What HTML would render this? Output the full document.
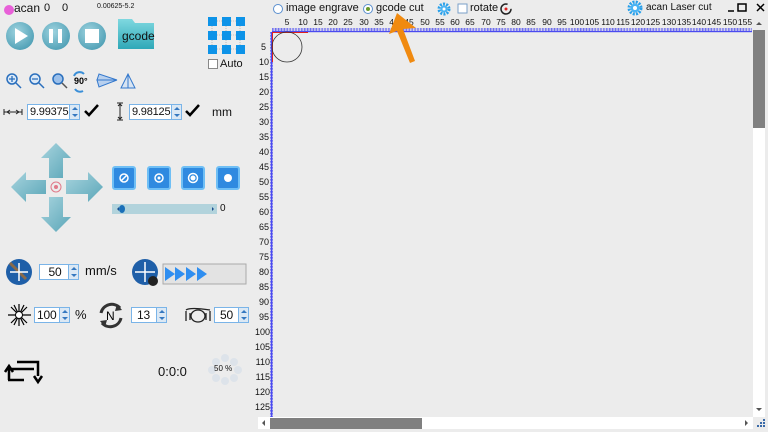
<!DOCTYPE html>
<html><head><meta charset="utf-8">
<style>
*{margin:0;padding:0;box-sizing:border-box}
body{width:768px;height:432px;overflow:hidden;background:#ececec;font-family:"Liberation Sans",sans-serif;color:#111;position:relative}
.a{position:absolute}
.inp{position:absolute;height:16px;border:1px solid #7ab4e8;background:#fff;font-size:11px;line-height:14px;padding-left:2px;letter-spacing:-0.2px}
.inp .sp{position:absolute;right:0;top:0;width:10px;height:14px;background:#dbe8f4;border-left:1px solid #7ab4e8}
.inp .sp:before{content:"";position:absolute;left:2px;top:2px;border:3px solid transparent;border-bottom:3px solid #3578c0;border-top:0}
.inp .sp:after{content:"";position:absolute;left:2px;top:9px;border:3px solid transparent;border-top:3px solid #3578c0;border-bottom:0}
.rb{width:24px;height:24px;background:#2f8ae0;border:2px solid #6fbff5;border-radius:3px}
</style></head><body>

<div class="a" style="left:4px;top:5px;width:10px;height:10px;border-radius:50%;background:#e860d8"></div>
<div class="a" style="left:14px;top:1px;font-size:12px">acan</div>
<div class="a" style="left:44px;top:2px;font-size:11px">0</div>
<div class="a" style="left:62px;top:2px;font-size:11px">0</div>
<div class="a" style="left:97px;top:3px;font-size:7px">0.00625-5.2</div>

<svg class="a" style="left:0;top:0" width="260" height="130">
<defs><radialGradient id="g" cx="40%" cy="35%" r="70%"><stop offset="0" stop-color="#9ed3df"/><stop offset="1" stop-color="#4e9fb5"/></radialGradient>
<linearGradient id="f" x1="0" y1="0" x2="0" y2="1"><stop offset="0" stop-color="#7fd8e0"/><stop offset="1" stop-color="#2fa8b8"/></linearGradient></defs>
<circle cx="20" cy="36" r="14" fill="url(#g)"/><path d="M15 28 L28 36 L15 44Z" fill="#fff"/>
<circle cx="56" cy="36" r="14" fill="url(#g)"/><rect x="49" y="29" width="4" height="14" fill="#fff"/><rect x="58" y="29" width="4" height="14" fill="#fff"/>
<circle cx="92" cy="36" r="14" fill="url(#g)"/><rect x="85" y="29" width="14" height="14" fill="#fff"/>
<path d="M118 19 h14 l3 4 h19 v26 h-36z" fill="url(#f)"/>
<text x="122" y="40" font-size="12" fill="#111" font-family="Liberation Sans">gcode</text>
<g fill="#0d93e8">
<rect x="208" y="17" width="9" height="9"/><rect x="222" y="17" width="9" height="9"/><rect x="236" y="17" width="9" height="9"/>
<rect x="208" y="31" width="9" height="9"/><rect x="222" y="31" width="9" height="9"/><rect x="236" y="31" width="9" height="9"/>
<rect x="208" y="45" width="9" height="9"/><rect x="222" y="45" width="9" height="9"/><rect x="236" y="45" width="9" height="9"/></g>
<g stroke="#999" stroke-dasharray="1 1" stroke-width="0.6"><path d="M217 21h5M231 21h5M217 35h5M231 35h5M217 49h5M231 49h5M212 26v5M226 26v5M240 26v5M212 40v5M226 40v5M240 40v5"/></g>
<g stroke="#2a6fbd" stroke-width="1.5" fill="#dbe9f7">
<circle cx="12" cy="79" r="5"/><path d="M16 83 l5 5"/><circle cx="35" cy="79" r="5"/><path d="M39 83 l5 5"/>
<circle cx="58" cy="79" r="5" fill="#9cc0ea"/><path d="M62 83 l5 5" stroke="#555"/></g>
<path d="M9 79h6M12 76v6M32 79h6" stroke="#2a6fbd" stroke-width="1.3"/>
<text x="74" y="84" font-size="9" font-weight="bold" font-family="Liberation Sans">90°</text>
<path d="M74 76 a6 6 0 0 1 10 -2 M83 91 a6 6 0 0 1 -8 -2" stroke="#3a8fd8" stroke-width="2" fill="none"/>
<path d="M97 80 L117 80 L99 74Z M97 80 L117 80 L99 87Z" fill="#b8d0ee" stroke="#3478cc"/>
<path d="M128 74 L121 88 H135Z" fill="#d8e4f2" stroke="#3478cc"/>
<path d="M128 74 V88" stroke="#3478cc"/>
<path d="M4 112 H22 M4 109 v6 M22 109 v6 M7 112 l3 -2 M7 112 l3 2 M19 112 l-3 -2 M19 112 l-3 2" stroke="#222" stroke-width="1"/>
<path d="M85 111 l4 4 l9 -10" stroke="#000" stroke-width="2.5" fill="none"/>
<path d="M117 103 h6 M120 103 v17 M117 120 h6 M118 106 l2 -2 l2 2 M118 117 l2 2 l2 -2" stroke="#222" stroke-width="1" fill="none"/>
<path d="M186 111 l4 4 l9 -10" stroke="#000" stroke-width="2.5" fill="none"/>
</svg>
<div class="a" style="left:208px;top:59px;width:10px;height:10px;border:1px solid #888;background:#fff"></div>
<div class="a" style="left:220px;top:58px;font-size:11px">Auto</div>
<div class="inp" style="left:27px;top:104px;width:53px">9.99375<span class="sp"></span></div>
<div class="inp" style="left:129px;top:104px;width:53px">9.98125<span class="sp"></span></div>
<div class="a" style="left:212px;top:105px;font-size:12px">mm</div>

<svg class="a" style="left:0;top:130px" width="260" height="150">
<defs><linearGradient id="ar" x1="0" y1="0" x2="1" y2="1"><stop offset="0" stop-color="#a8d4de"/><stop offset="1" stop-color="#5aa6b8"/></linearGradient></defs>
<g fill="url(#ar)">
<path d="M56 13 L71 28 H63 V48 H49 V28 H41Z"/>
<path d="M56 102 L71 87 H63 V67 H49 V87 H41Z"/>
<path d="M11 57 L26 42 V50 H46 V64 H26 V72Z"/>
<path d="M103 57 L88 42 V50 H66 V64 H88 V72Z"/></g>
<circle cx="56" cy="57" r="5" fill="none" stroke="#e07a8a" stroke-width="1"/><circle cx="56" cy="57" r="2" fill="#e07a8a"/>
</svg>
<div class="a rb" style="left:112px;top:166px"></div>
<div class="a rb" style="left:147px;top:166px"></div>
<div class="a rb" style="left:181px;top:166px"></div>
<div class="a rb" style="left:216px;top:166px"></div>
<svg class="a" style="left:0;top:160px" width="260" height="60">
<g stroke="#fff" fill="none" stroke-width="1.5"><circle cx="124" cy="18" r="4"/><path d="M121 21 l6 -6"/><circle cx="159" cy="18" r="4"/><circle cx="193" cy="18" r="4.5"/></g>
<circle cx="159" cy="18" r="1.5" fill="#fff"/><circle cx="193" cy="18" r="2.5" fill="#fff"/><circle cx="228" cy="18" r="4" fill="#fff"/>
<rect x="112" y="44" width="105" height="10" fill="#b2d3dc"/>
<ellipse cx="122" cy="49" rx="3" ry="4" fill="#1a6fb8"/>
<path d="M117 49 l2 -2 v4z M214 49 l-2 -2 v4z" fill="#1a4f90"/>
</svg>
<div class="a" style="left:220px;top:203px;font-size:10px">0</div>

<svg class="a" style="left:0;top:255px" width="260" height="40">
<circle cx="19" cy="17" r="13" fill="#1f5fa8"/><path d="M10 8 L26 24" stroke="#8a6a4a" stroke-width="3"/>
<path d="M19 8 V26 M10 17 H28" stroke="#fff" stroke-width="1.5"/>
<circle cx="145" cy="17" r="13" fill="#1f5fa8"/><path d="M145 7 V27 M135 17 H155" stroke="#fff" stroke-width="1.5"/>
<circle cx="153" cy="26" r="5" fill="#222"/>
<rect x="163" y="9" width="83" height="20" fill="#e3e3e3" stroke="#aaa"/>
<g fill="#2f8ef0"><path d="M165 12 l10 7 l-10 7z M175 12 l10 7 l-10 7z M186 12 l10 7 l-10 7z M197 12 l10 7 l-10 7z"/></g>
</svg>
<div class="inp" style="left:39px;top:264px;width:40px;text-align:center;padding-right:10px;font-size:12px">50<span class="sp"></span></div>
<div class="a" style="left:85px;top:263px;font-size:13px">mm/s</div>

<svg class="a" style="left:0;top:300px" width="260" height="36">
<g stroke="#000" stroke-width="1.2"><path d="M19 4 V26 M8 15 H31 M11 7 L27 23 M27 7 L11 23 M14 5 L24 25 M24 5 L14 25"/></g>
<circle cx="19" cy="15" r="3.5" fill="#fff" stroke="#000"/>
<path d="M101 13 a11 11 0 0 1 19 -5 M121 18 a11 11 0 0 1 -19 5" stroke="#333" stroke-width="3" fill="none"/>
<path d="M117 4 l5 6 l-7 1z M105 27 l-5 -6 l7 -1z" fill="#333"/>
<text x="106" y="20" font-size="12" font-family="Liberation Sans">N</text>
<g stroke="#222" stroke-width="1.3" fill="none"><ellipse cx="198" cy="16" rx="7" ry="6"/><path d="M186 10 q4 -3 24 0 M186 11 v10 M210 11 v10 M190 13 v7 M206 13 v7"/></g>
</svg>
<div class="inp" style="left:34px;top:307px;width:36px;font-size:12px">100<span class="sp"></span></div>
<div class="a" style="left:75px;top:307px;font-size:13px">%</div>
<div class="inp" style="left:131px;top:307px;width:36px;padding-left:5px;font-size:12px">13<span class="sp"></span></div>
<div class="inp" style="left:214px;top:307px;width:35px;padding-left:5px;font-size:12px">50<span class="sp"></span></div>

<svg class="a" style="left:0;top:350px" width="260" height="50">
<path d="M9 30 V19 H34 M8 30 H24 M5 22 l4 -6 l4 6" stroke="#000" stroke-width="2.5" fill="none"/>
<path d="M17 12 H38 V26 M34 26 l4 6 l4 -6" stroke="#000" stroke-width="2.5" fill="none"/>
<g fill="#dde3ea"><circle cx="225" cy="8" r="4"/><circle cx="234" cy="12" r="4"/><circle cx="238" cy="20" r="4"/><circle cx="234" cy="28" r="4"/><circle cx="225" cy="31" r="4"/><circle cx="216" cy="28" r="4"/><circle cx="212" cy="20" r="4"/><circle cx="216" cy="12" r="4"/></g>
</svg>
<div class="a" style="left:158px;top:364px;font-size:13px">0:0:0</div>
<div class="a" style="left:214px;top:364px;font-size:8px">50 %</div>

<svg class="a" style="left:260px;top:0" width="508" height="32">
<circle cx="18" cy="9" r="4.5" fill="#fff" stroke="#5a8fcf"/>
<circle cx="108" cy="9" r="4.5" fill="#fff" stroke="#5a8fcf"/><circle cx="108" cy="9" r="2" fill="#6a9a2a"/>
<g transform="translate(184,9)"><circle r="5" fill="none" stroke="#2aa0ea" stroke-width="3" stroke-dasharray="2 1.2"/><circle r="3.5" fill="#4ab4f4"/><circle r="1.5" fill="#fff"/></g>
<rect x="198" y="4" width="9" height="9" fill="#fff" stroke="#7a9fc8"/>
<circle cx="246" cy="9" r="5" fill="none" stroke="#222" stroke-width="1.5" stroke-dasharray="25 6"/><circle cx="246" cy="9" r="1.5" fill="#d22"/>
<g transform="translate(375,8)"><circle r="6" fill="none" stroke="#2aa0ea" stroke-width="3" stroke-dasharray="2 1.2"/><circle r="4.5" fill="#4ab4f4"/><circle r="2" fill="#fff"/></g>
<path d="M468 11 h6" stroke="#000" stroke-width="1.5"/>
<rect x="478" y="4" width="8" height="7" fill="none" stroke="#000" stroke-width="1.5"/>
<path d="M497 4 l7 7 M504 4 l-7 7" stroke="#000" stroke-width="1.5"/>
</svg>
<div class="a" style="left:286px;top:2px;font-size:11px">image engrave</div>
<div class="a" style="left:376px;top:2px;font-size:11px">gcode cut</div>
<div class="a" style="left:470px;top:2px;font-size:11px">rotate</div>
<div class="a" style="left:646px;top:2px;font-size:10px">acan Laser cut</div>

<svg class="a" style="left:0;top:0" width="768" height="432" font-family="Liberation Sans" font-size="9">
<defs>
<pattern id="th" x="272" y="0" width="1.525" height="4" patternUnits="userSpaceOnUse"><rect width="0.7" height="4" fill="#4a4af0"/></pattern>
<pattern id="tv" x="0" y="32" width="4" height="1.5" patternUnits="userSpaceOnUse"><rect width="4" height="0.7" fill="#4a4af0"/></pattern>
</defs>
<rect x="272" y="28" width="480" height="4" fill="url(#th)"/>
<rect x="272" y="31" width="480" height="1.2" fill="#4a4af0"/>
<rect x="270" y="32" width="3" height="385" fill="url(#tv)"/>
<rect x="271" y="32" width="1.2" height="385" fill="#4a4af0"/>
<path d="M272 32.5 H308 M272.5 32 V62" stroke="#e02020" stroke-width="1"/>
<circle cx="287" cy="47" r="15" fill="none" stroke="#333" stroke-width="0.8"/>
<g text-anchor="middle" fill="#111" font-size="8.5">
<text x="287" y="25">5</text><text x="303" y="25">10</text><text x="318" y="25">15</text><text x="333" y="25">20</text><text x="348" y="25">25</text><text x="364" y="25">30</text><text x="379" y="25">35</text><text x="394" y="25">40</text><text x="409" y="25">45</text><text x="425" y="25">50</text><text x="440" y="25">55</text><text x="455" y="25">60</text><text x="470" y="25">65</text><text x="486" y="25">70</text><text x="501" y="25">75</text><text x="516" y="25">80</text><text x="531" y="25">85</text><text x="547" y="25">90</text><text x="562" y="25">95</text><text x="577" y="25">100</text><text x="592" y="25">105</text><text x="608" y="25">110</text><text x="623" y="25">115</text><text x="638" y="25">120</text><text x="653" y="25">125</text><text x="669" y="25">130</text><text x="684" y="25">135</text><text x="699" y="25">140</text><text x="714" y="25">145</text><text x="730" y="25">150</text><text x="745" y="25">155</text></g>
<g text-anchor="end" fill="#111">
<text x="266" y="50">5</text><text x="269" y="65">10</text><text x="269" y="80">15</text><text x="269" y="95">20</text><text x="269" y="110">25</text><text x="269" y="125">30</text><text x="269" y="140">35</text><text x="269" y="155">40</text><text x="269" y="170">45</text><text x="269" y="185">50</text><text x="269" y="200">55</text><text x="269" y="215">60</text><text x="269" y="230">65</text><text x="269" y="245">70</text><text x="269" y="260">75</text><text x="269" y="275">80</text><text x="269" y="290">85</text><text x="269" y="305">90</text><text x="269" y="320">95</text><text x="270" y="335">100</text><text x="270" y="350">105</text><text x="270" y="365">110</text><text x="270" y="380">115</text><text x="270" y="395">120</text><text x="270" y="410">125</text></g>
<rect x="753" y="30" width="12" height="387" fill="#fff"/>
<rect x="753" y="30" width="12" height="98" fill="#808080"/>
<path d="M756 25 l3 -3 l3 3z M756 408 l3 3 l3 -3z" fill="#555"/>
<rect x="258" y="417" width="495" height="12" fill="#fff"/>
<rect x="270" y="418" width="152" height="11" fill="#808080"/>
<path d="M265 420 l-3 3 l3 3z M745 420 l3 3 l-3 3z" fill="#555"/>
<g fill="#3a6aa8"><rect x="763" y="419" width="2" height="2"/><rect x="760" y="422" width="2" height="2"/><rect x="763" y="422" width="2" height="2"/><rect x="757" y="425" width="2" height="2"/><rect x="760" y="425" width="2" height="2"/><rect x="763" y="425" width="2" height="2"/></g>
<!-- orange arrow -->
<path d="M397 13 L389 34 L397 31 L410 63 L415 61 L403 29 L416 28Z" fill="#f08a10"/>
</svg>
</body></html>
